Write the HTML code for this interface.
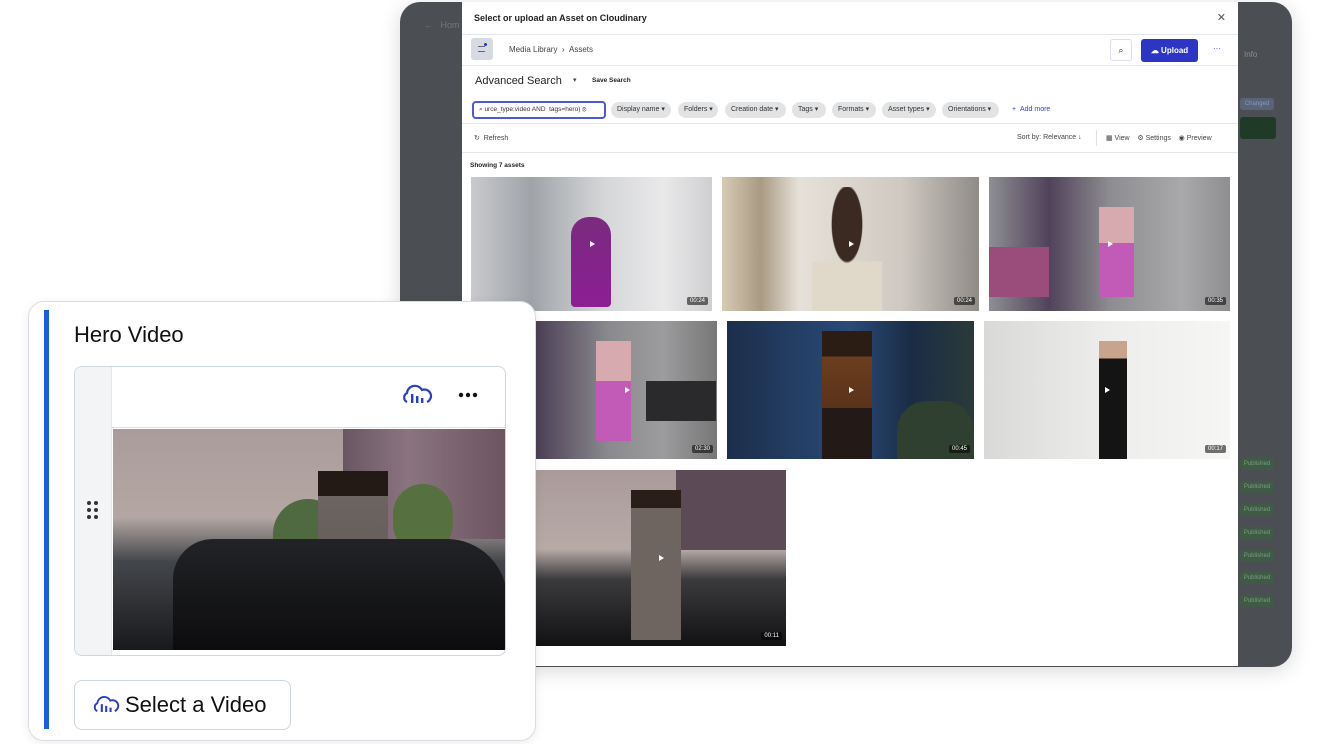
<!DOCTYPE html>
<html><head><meta charset="utf-8"><style>
*{margin:0;padding:0;box-sizing:border-box}
body{width:1320px;height:744px;background:#fff;position:relative;overflow:hidden;font-family:"Liberation Sans",sans-serif;color:#222}
.a{position:absolute}
.frame{left:400px;top:2px;width:892px;height:665px;background:#4b4e53;border-radius:20px;box-shadow:0 4px 20px rgba(0,0,0,.15)}
.modal{left:462px;top:2px;width:776px;height:664px;background:#fff}
.line{height:1px;background:#e3e6ea;left:0;width:776px}
.chip{position:absolute;top:100px;height:16px;border-radius:8px;background:#e2e3e5;font-size:7px;line-height:16px;padding:0 6px;color:#333;white-space:nowrap}
.t{font-size:7px;color:#444;position:absolute;white-space:nowrap}
.th{position:absolute;overflow:hidden}
.dur{position:absolute;right:4px;bottom:6px;background:rgba(0,0,0,.55);color:#fff;font-size:6px;padding:1px 3px;border-radius:2px}
.play{position:absolute;left:50%;top:50%;width:0;height:0;border-left:5px solid #fff;border-top:3.5px solid transparent;border-bottom:3.5px solid transparent;margin:-3px 0 0 -2px}
.pub{position:absolute;left:1240px;width:34px;height:12px;background:#3f5a45;border-radius:3px;font-size:6px;color:#7f9a82;line-height:12px;text-align:center}
</style></head><body>
<div class="a frame"></div>
<div class="a" style="left:424px;top:20px;color:#777;font-size:9px">←&nbsp;&nbsp; Hom</div>
<div class="a" style="left:1244px;top:50px;color:#8a8d92;font-size:8px">Info</div>
<div class="a" style="left:1240px;top:98px;width:34px;height:12px;background:#5a6478;border-radius:3px;font-size:6px;color:#8c9ab8;line-height:12px;text-align:center">Changed</div>
<div class="a" style="left:1240px;top:117px;width:36px;height:22px;background:#1f3b28;border-radius:3px"></div>
<div class="pub" style="top:458px">Published</div><div class="pub" style="top:481px">Published</div><div class="pub" style="top:504px">Published</div><div class="pub" style="top:527px">Published</div><div class="pub" style="top:550px">Published</div><div class="pub" style="top:572px">Published</div><div class="pub" style="top:595px">Published</div>
<div class="a modal">
 <div class="a" style="left:12px;top:11px;font-size:9px;font-weight:bold;color:#222">Select or upload an Asset on Cloudinary</div>
 <div class="a" style="right:12px;top:9px;font-size:11px;color:#555">✕</div>
 <div class="a line" style="top:32px"></div>
 <div class="a" style="left:9px;top:36px;width:22px;height:22px;background:#d5dae3;border-radius:3px"></div>
 <div class="a" style="left:16px;top:44px;width:7px;height:6px;border-top:1px solid #667;border-bottom:1px solid #667"></div>
 <div class="a" style="left:22px;top:41px;width:3px;height:3px;background:#2233cc;border-radius:50%"></div>
 <div class="t" style="left:47px;top:43px;font-size:8px">Media Library &nbsp;› &nbsp;Assets</div>
 <div class="a" style="left:648px;top:37px;width:22px;height:22px;border:1px solid #dde;border-radius:3px;font-size:9px;text-align:center;line-height:20px">⌕</div>
 <div class="a" style="left:679px;top:37px;width:57px;height:23px;background:#2d36c4;border-radius:3px;color:#fff;font-size:8px;font-weight:bold;line-height:23px;text-align:center">☁ Upload</div>
 <div class="a" style="left:751px;top:42px;color:#33c;font-size:8px">···</div>
 <div class="a line" style="top:63px"></div>
 <div class="a" style="left:13px;top:73px;font-size:11px;color:#222">Advanced Search</div>
 <div class="t" style="left:111px;top:74px">▾</div>
 <div class="t" style="left:130px;top:75px;font-weight:bold;font-size:6.5px;color:#222">Save Search</div>
 <div class="a" style="left:10px;top:99px;width:134px;height:18px;border:2px solid #4d5ad6;border-radius:4px;font-size:6.5px;line-height:14px;padding-left:5px;color:#333;white-space:nowrap;overflow:hidden">⌕ urce_type:video AND &nbsp;tags=hero) ⊗</div>
 <div class="chip" style="left:149px;width:60px">Display name ▾</div>
 <div class="chip" style="left:216px;width:40px">Folders ▾</div>
 <div class="chip" style="left:263px;width:61px">Creation date ▾</div>
 <div class="chip" style="left:330px;width:34px">Tags ▾</div>
 <div class="chip" style="left:370px;width:44px">Formats ▾</div>
 <div class="chip" style="left:420px;width:54px">Asset types ▾</div>
 <div class="chip" style="left:480px;width:57px">Orientations ▾</div>
 <div class="t" style="left:550px;top:104px;color:#3340c8">+ &nbsp;Add more</div>
 <div class="a line" style="top:121px"></div>
 <div class="t" style="left:12px;top:132px">↻ &nbsp;Refresh</div>
 <div class="t" style="left:555px;top:132px">Sort by: Relevance ↓</div>
 <div class="a" style="left:634px;top:128px;width:1px;height:16px;background:#dde"></div>
 <div class="t" style="left:644px;top:132px">▦ View &nbsp;&nbsp;&nbsp;⚙ Settings &nbsp;&nbsp;&nbsp;◉ Preview</div>
 <div class="a line" style="top:150px"></div>
 <div class="t" style="left:8px;top:160px;font-weight:bold;font-size:6.5px;color:#222">Showing 7 assets</div>
</div>
<div class="th" style="left:471px;top:177px;width:241px;height:134px;background:linear-gradient(90deg,#c9cacd 0,#9fa3a8 25%,#d5d6d8 55%,#e9e9ea 80%,#cfcfd1)"><div class="a" style="left:100px;top:40px;width:40px;height:90px;background:linear-gradient(#7a2a80,#8c1f93);border-radius:18px 18px 4px 4px"></div><div class="play"></div><div class="dur">00:24</div></div>
<div class="th" style="left:722px;top:177px;width:257px;height:134px;background:linear-gradient(90deg,#d7cbb5 0,#a99a82 15%,#e6e1d8 30%,#cfc9c2 70%,#8f8b86)"><div class="a" style="left:90px;top:10px;width:70px;height:124px;background:radial-gradient(ellipse at 50% 30%,#3a2a22 30%,transparent 32%),linear-gradient(transparent 60%,#e0d8c8 60%)"></div><div class="play"></div><div class="dur">00:24</div></div>
<div class="th" style="left:989px;top:177px;width:241px;height:134px;background:linear-gradient(90deg,#8e8e93 0,#50425a 25%,#8d8c90 50%,#a9a9ab 80%,#8e8e90)"><div class="a" style="left:0;top:70px;width:60px;height:50px;background:#9a4d7a"></div><div class="a" style="left:110px;top:30px;width:35px;height:90px;background:linear-gradient(#d7aab0 40%,#c25ab8 40%)"></div><div class="play"></div><div class="dur">00:35</div></div>
<div class="th" style="left:536px;top:321px;width:181px;height:138px;background:linear-gradient(90deg,#4b3f56 0,#8a8a8e 40%,#9c9c9e 70%,#777)"><div class="a" style="left:60px;top:20px;width:35px;height:100px;background:linear-gradient(#d7aab0 40%,#c25ab8 40%)"></div><div class="a" style="left:110px;top:60px;width:70px;height:40px;background:#2a2a2c"></div><div class="play"></div><div class="dur">02:30</div></div>
<div class="th" style="left:727px;top:321px;width:247px;height:138px;background:linear-gradient(90deg,#1c2e4a 0,#2a4a78 50%,#1a2c44 75%,#2a3a3a)"><div class="a" style="left:95px;top:10px;width:50px;height:128px;background:linear-gradient(#2b1c14 20%,#6b3e1f 20%,#5a331a 60%,#231a18 60%)"></div><div class="a" style="left:170px;top:80px;width:77px;height:58px;background:#2f4030;border-radius:30px 30px 0 0"></div><div class="play"></div><div class="dur">00:45</div></div>
<div class="th" style="left:984px;top:321px;width:246px;height:138px;background:linear-gradient(90deg,#d9d9d7,#ededeb 50%,#f6f6f4)"><div class="a" style="left:115px;top:20px;width:28px;height:118px;background:linear-gradient(#c9a48c 15%,#141414 15%)"></div><div class="play"></div><div class="dur">00:17</div></div>
<div class="th" style="left:536px;top:470px;width:250px;height:176px;background:linear-gradient(#aa9b9a 0,#b7aaa6 45%,#3b3b3e 62%,#121215 100%)"><div class="a" style="left:140px;top:0;width:110px;height:80px;background:#5c4b57"></div><div class="a" style="left:95px;top:20px;width:50px;height:150px;background:linear-gradient(#2a1e18 12%,#6e6560 12%)"></div><div class="play"></div><div class="dur">00:11</div></div>
<div class="a" style="left:28px;top:301px;width:508px;height:440px;background:#fff;border:1px solid #d9dde3;border-radius:16px;box-shadow:0 2px 10px rgba(0,0,0,.08)"></div>
<div class="a" style="left:44px;top:310px;width:5px;height:419px;background:#1a5fe0"></div>
<div class="a" style="left:74px;top:322px;font-size:22px;color:#111">Hero Video</div>
<div class="a" style="left:74px;top:366px;width:432px;height:290px;border:1.5px solid #cdd6e2;border-radius:8px;overflow:hidden">
 <div class="a" style="left:0;top:0;width:37px;height:290px;background:#f3f4f6;border-right:1px solid #e3e6ea"></div>
 <div class="a" style="left:37px;top:60px;width:395px;height:1px;background:#dde3ea"></div>
 <div class="a" style="left:38px;top:62px;width:394px;height:221px;background:linear-gradient(#aa9c9a 0,#b4a7a3 40%,#43464b 60%,#18191c 100%);overflow:hidden">
  <div class="a" style="left:230px;top:0;width:164px;height:110px;background:linear-gradient(90deg,#6a5663,#8a7480 40%,#6b5460)"></div>
  <div class="a" style="left:160px;top:70px;width:70px;height:80px;background:#4f6a40;border-radius:35px"></div>
  <div class="a" style="left:280px;top:55px;width:60px;height:70px;background:#56703f;border-radius:30px"></div>
  <div class="a" style="left:205px;top:42px;width:70px;height:179px;background:linear-gradient(#231a16 14%,#6c6460 14%,#615955 70%,#4e4743)"></div>
  <div class="a" style="left:60px;top:110px;width:334px;height:111px;background:linear-gradient(#222326,#0c0c0e);border-radius:40px 60px 0 0"></div>
 </div>
</div>
<svg class="a" style="left:401px;top:384px" width="32" height="22" viewBox="0 0 32 22"><path d="M6 18a5 5 0 0 1 0-9 8 8 0 0 1 15-3 6 6 0 0 1 5 12" fill="none" stroke="#2a3fc8" stroke-width="2.2"/><rect x="10" y="10" width="2.4" height="9" fill="#2a3fc8"/><rect x="15" y="12" width="2.4" height="7" fill="#2a3fc8"/><rect x="20" y="14" width="2.4" height="5" fill="#2a3fc8"/></svg>
<svg class="a" style="left:458px;top:392px" width="22" height="6"><g fill="#111"><circle cx="3" cy="3" r="2.2"/><circle cx="10" cy="3" r="2.2"/><circle cx="17" cy="3" r="2.2"/></g></svg>
<svg class="a" style="left:86px;top:500px" width="14" height="22"><g fill="#333"><circle cx="3" cy="3" r="2"/><circle cx="10" cy="3" r="2"/><circle cx="3" cy="10" r="2"/><circle cx="10" cy="10" r="2"/><circle cx="3" cy="17" r="2"/><circle cx="10" cy="17" r="2"/></g></svg>
<div class="a" style="left:74px;top:680px;width:217px;height:50px;border:1.5px solid #cdd6e2;border-radius:8px"></div>
<svg class="a" style="left:92px;top:695px" width="28" height="20" viewBox="0 0 32 22"><path d="M6 18a5 5 0 0 1 0-9 8 8 0 0 1 15-3 6 6 0 0 1 5 12" fill="none" stroke="#2a3fc8" stroke-width="2.2"/><rect x="10" y="10" width="2.4" height="9" fill="#2a3fc8"/><rect x="15" y="12" width="2.4" height="7" fill="#2a3fc8"/><rect x="20" y="14" width="2.4" height="5" fill="#2a3fc8"/></svg>
<div class="a" style="left:125px;top:692px;font-size:22px;color:#111">Select a Video</div>
</body></html>
